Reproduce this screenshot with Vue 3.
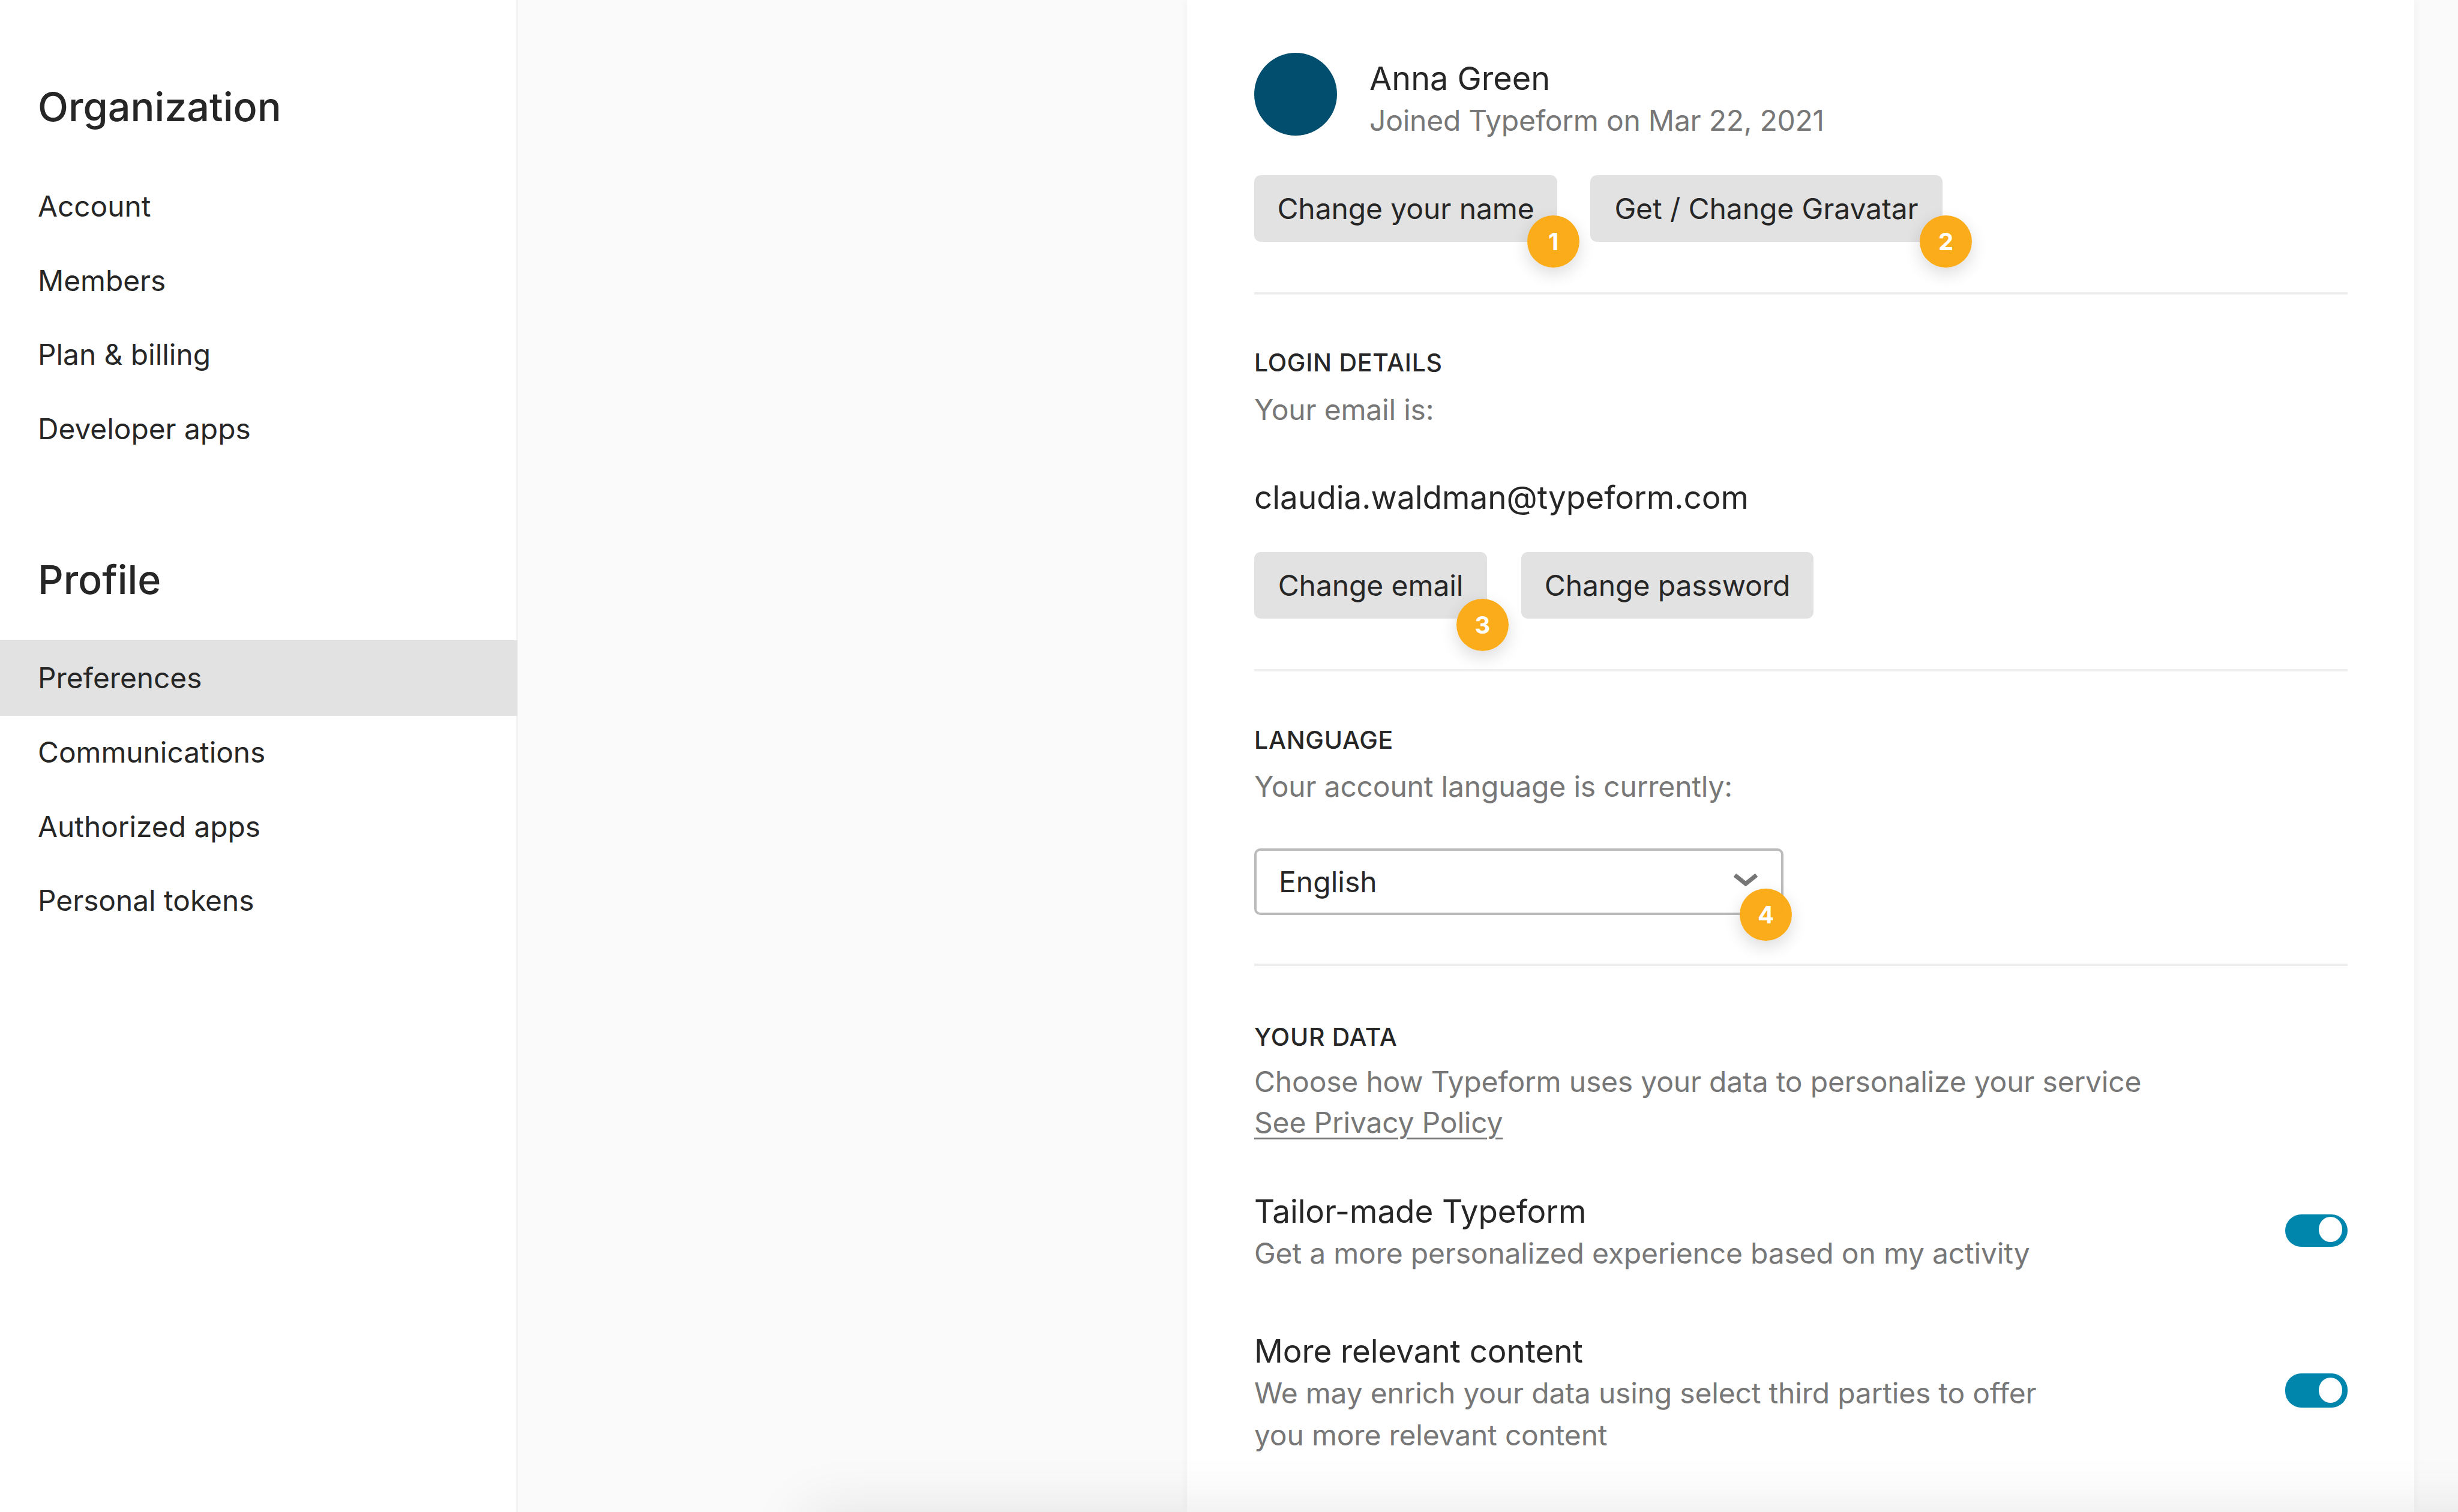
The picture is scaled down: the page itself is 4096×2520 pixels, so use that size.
<script setup>
const orgLinks = ['Account', 'Members', 'Plan & billing', 'Developer apps']
const profileLinks = ['Preferences', 'Communications', 'Authorized apps', 'Personal tokens']
</script>

<template>
  <div class="page">
    <aside class="sidebar">
      <h2 class="side-title org">Organization</h2>
      <ul class="side-list">
        <li v-for="l in orgLinks" :key="l" class="side-item">{{ l }}</li>
      </ul>
      <h2 class="side-title prof">Profile</h2>
      <ul class="side-list list-prof">
        <li v-for="(l, i) in profileLinks" :key="l" class="side-item" :class="{ active: i === 0 }">{{ l }}</li>
      </ul>
    </aside>
    <main class="main">
      <section class="card">
        <div class="profile">
          <div class="avatar"></div>
          <div class="who">
            <div class="name">Anna Green</div>
            <div class="joined">Joined Typeform on Mar 22, 2021</div>
          </div>
        </div>
        <div class="btn-row first">
          <div class="btn-wrap">
            <button class="btn b-name">Change your name</button>
            <span class="badge bd1">1</span>
          </div>
          <div class="btn-wrap">
            <button class="btn b-grav">Get / Change Gravatar</button>
            <span class="badge bd2">2</span>
          </div>
        </div>
        <hr class="rule r1" />

        <h3 class="label l-login">LOGIN DETAILS</h3>
        <p class="muted m-login">Your email is:</p>
        <div class="email">claudia.waldman@typeform.com</div>
        <div class="btn-row second">
          <div class="btn-wrap">
            <button class="btn b-email">Change email</button>
            <span class="badge bd3">3</span>
          </div>
          <div class="btn-wrap">
            <button class="btn b-pass">Change password</button>
          </div>
        </div>
        <hr class="rule r2" />

        <h3 class="label l-lang">LANGUAGE</h3>
        <p class="muted m-lang">Your account language is currently:</p>
        <div class="select">
          <span>English</span>
          <svg class="chev" viewBox="0 0 40 21" width="40" height="21" aria-hidden="true">
            <path d="M2 2.5 L20 17 L38 2.5" fill="none" stroke="#767676" stroke-width="7" />
          </svg>
          <span class="badge bd4">4</span>
        </div>
        <hr class="rule r3" />

        <h3 class="label l-data">YOUR DATA</h3>
        <p class="muted m-data">Choose how Typeform uses your data to personalize your service<br /><a class="link">See Privacy Policy</a></p>

        <div class="option o1">
          <div>
            <div class="opt-title">Tailor-made Typeform</div>
            <div class="opt-desc">Get a more personalized experience based on my activity</div>
          </div>
          <div class="toggle t1"><span class="knob"></span></div>
        </div>
        <div class="option o2">
          <div>
            <div class="opt-title">More relevant content</div>
            <div class="opt-desc">We may enrich your data using select third parties to offer<br />you more relevant content</div>
          </div>
          <div class="toggle t2"><span class="knob"></span></div>
        </div>
      </section>
      <div class="footer-shadow"></div>
    </main>
  </div>
</template>

<style>
html, body { margin: 0; padding: 0; background: #fafafa; }
</style>

<style scoped>
.page {
  width: 4096px;
  height: 2520px;
  display: flex;
  overflow: hidden;
  position: relative;
  background: #fafafa;
  font-family: Inter, "Noto Sans", sans-serif;
  color: #262627;
}
.sidebar {
  width: 860px;
  flex: none;
  background: #fff;
  border-right: 3px solid #f2f2f2;
  padding-top: 138px;
}
.side-title {
  margin: 0;
  padding-left: 63px;
  font-size: 66.5px;
  line-height: 80px;
  font-weight: 500;
}
.side-list { list-style: none; margin: 65px 0 0; padding: 0; }
.side-item {
  box-sizing: border-box;
  height: 123.5px;
  line-height: 123.5px;
  padding-left: 63px;
  font-size: 47.8px;
}
.side-item.active { background: #e2e2e2; height: 126px; line-height: 126px; width: 862px; }
.prof { margin-top: 149px; }
.list-prof { margin-top: 61px; }

.main {
  flex: 1;
  position: relative;
  padding-left: 1115px;
}
.card {
  width: 2045px;
  height: 2520px;
  box-sizing: border-box;
  background: #fff;
  padding: 88px 111px 0 112px;
  box-shadow: 0 0 14px rgba(0, 0, 0, 0.05);
}
.profile { display: flex; gap: 54px; height: 138px; }
.avatar { width: 138px; height: 138px; border-radius: 50%; background: #024e6e; flex: none; }
.name { font-size: 54px; line-height: 70px; margin-top: 8px; }
.joined { font-size: 48px; line-height: 70px; color: #777; letter-spacing: -0.25px; }

.btn-row { display: flex; }
.btn-row.first { margin-top: 65.5px; gap: 55px; }
.btn-row.second { margin-top: 56px; gap: 57px; }
.btn-wrap { position: relative; }
.btn {
  display: block;
  height: 111px;
  padding: 0;
  border: 0;
  border-radius: 11px;
  background: #e2e2e2;
  color: #262627;
  font: inherit;
  font-size: 48px;
  letter-spacing: -0.1px;
  text-align: center;
}
.b-name { width: 505px; }
.b-grav { width: 587px; }
.b-email { width: 388px; }
.b-pass { width: 487px; }

.badge {
  position: absolute;
  width: 87px;
  height: 87px;
  border-radius: 50%;
  background: rgba(251, 170, 22, 0.98);
  color: #fff;
  font-size: 40px;
  font-weight: 700;
  line-height: 87px;
  text-align: center;
  box-shadow: 0 10px 28px rgba(0, 0, 0, 0.14);
}
.bd1 { left: 455px; top: 67px; }
.bd2 { left: 549px; top: 67px; }
.bd3 { left: 337px; top: 78px; }
.bd4 { left: 805px; top: 63px; }

.rule { border: 0; height: 4px; background: #eee; margin: 0; }
.r1 { margin-top: 84.5px; }
.r2 { margin-top: 84px; }
.r3 { margin-top: 81px; }

.label {
  margin: 0;
  font-size: 41px;
  line-height: 50px;
  font-weight: 500;
  letter-spacing: 0.7px;
}
.l-login { margin-top: 88px; }
.l-lang { margin-top: 89px; }
.l-data { margin-top: 93px; }
.muted { margin: 0; color: #777; font-size: 48px; line-height: 60px; letter-spacing: -0.2px; }
.m-login { margin-top: 24px; }
.m-lang { margin-top: 23px; }
.m-data { margin-top: 16px; line-height: 68px; }
.link { color: #777; text-decoration: underline; text-underline-offset: 8px; text-decoration-thickness: 3px; }
.email { margin-top: 81px; font-size: 53px; line-height: 70px; }

.select {
  position: relative;
  margin-top: 73px;
  width: 882px;
  height: 111px;
  box-sizing: border-box;
  border: 4px solid #bbb;
  border-radius: 10px;
  padding-left: 37px;
  display: flex;
  align-items: center;
  font-size: 48px;
}
.chev { position: absolute; left: 795px; top: 38px; }

.option { display: flex; justify-content: space-between; align-items: flex-start; }
.o1 { margin-top: 79px; }
.o2 { margin-top: 92px; }
.opt-title { font-size: 53px; line-height: 70px; letter-spacing: -0.1px; }
.opt-desc { font-size: 48px; line-height: 70.5px; color: #777; letter-spacing: -0.2px; }
.toggle { position: relative; width: 104px; background: #0086ad; border-radius: 27px; flex: none; }
.t1 { height: 54px; margin-top: 40px; }
.t2 { height: 57.5px; margin-top: 72px; }
.knob { position: absolute; right: 9px; width: 39.5px; height: 42px; border-radius: 50%; background: #fff; }
.t1 .knob { top: 4px; }
.t2 .knob { top: 7.5px; }

.footer-shadow {
  position: absolute;
  left: 480px;
  right: -200px;
  top: 2520px;
  height: 100px;
  box-shadow: 0 0 100px rgba(0, 0, 0, 0.1);
}
</style>
